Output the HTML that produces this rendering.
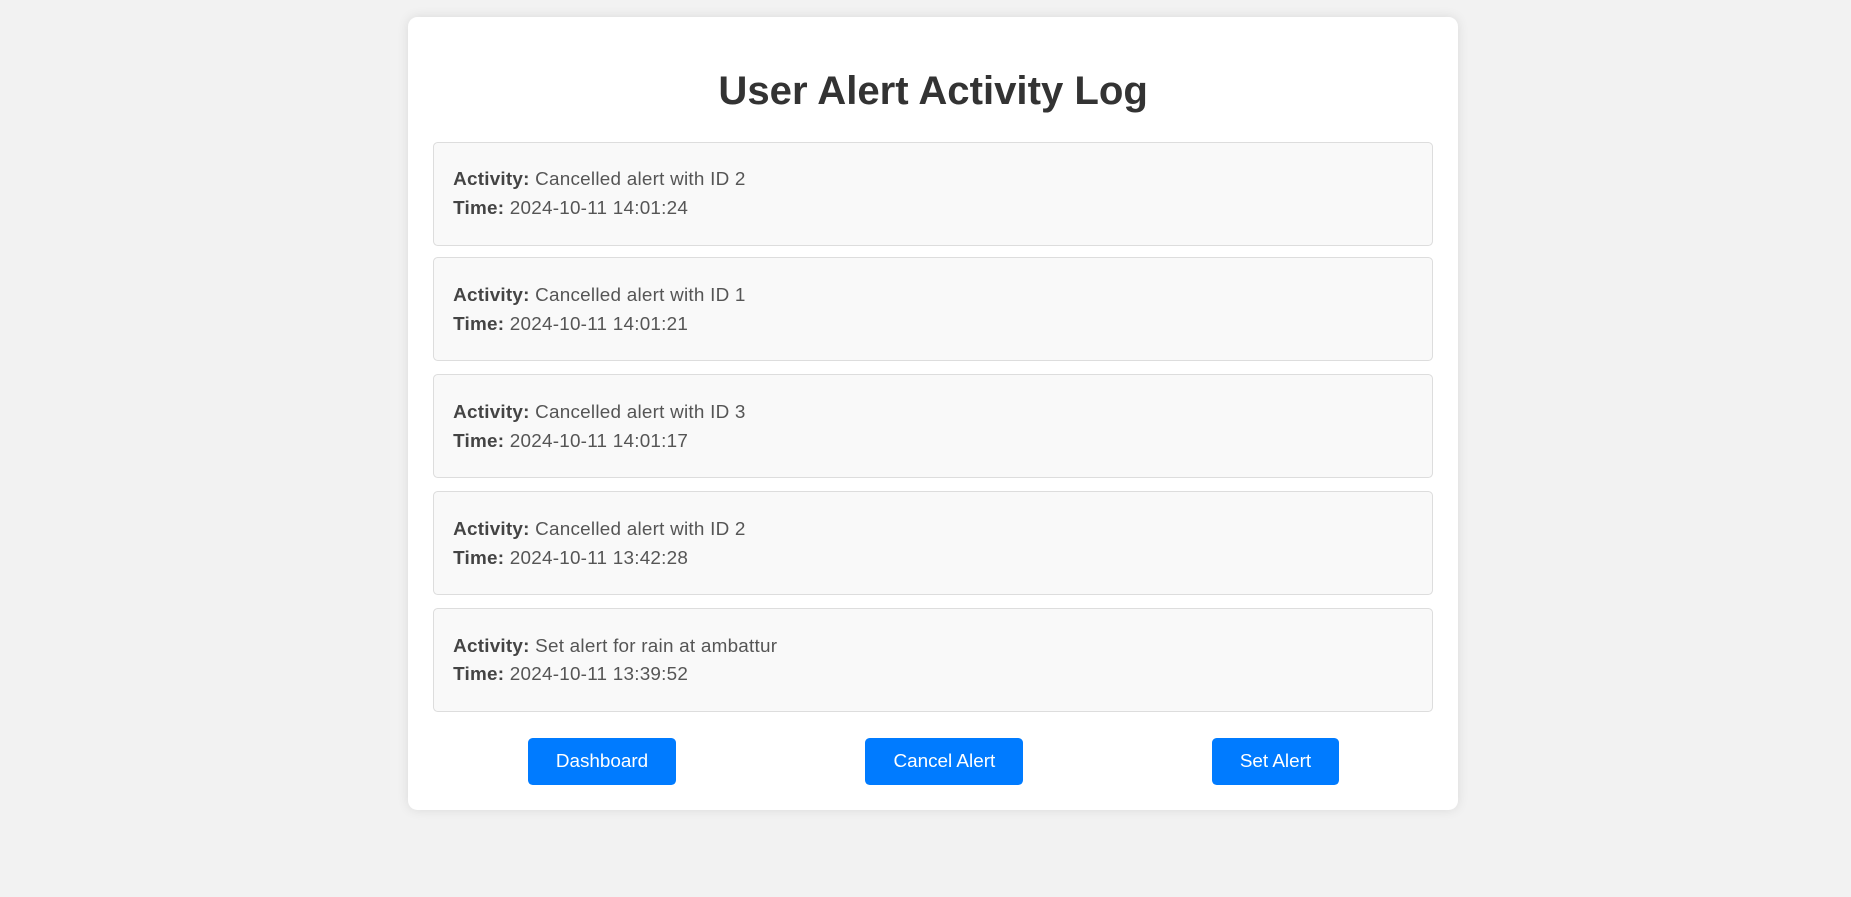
<!DOCTYPE html>
<html><head><meta charset="utf-8"><style>
html,body{margin:0;padding:0;}
body{width:1851px;height:897px;background:#f2f2f2;overflow:hidden;font-family:"Liberation Sans",Arial,sans-serif;}
.z{zoom:1.18049;position:relative;width:1568px;height:760px;}
.card{position:absolute;left:346px;top:14px;width:889px;height:672px;background:#fff;border-radius:8px;box-shadow:0 0 10px rgba(0,0,0,0.1);}
h1{position:absolute;left:0;right:0;top:42px;margin:0;text-align:center;font-size:34px;line-height:42px;color:#333;font-weight:bold;}
.item{position:absolute;left:21px;width:847px;height:88px;box-sizing:border-box;background:#f9f9f9;border:1px solid #ddd;border-radius:4px;padding:20px 16px;font-size:16px;line-height:24.5px;color:#555;letter-spacing:0.2px;}
.item b{color:#444;}
.btn{position:absolute;top:611px;height:40px;background:#007bff;color:#fff;border-radius:4px;font-size:16px;line-height:40px;text-align:center;}
</style></head><body><div class="z"><div class="card">
<h1>User Alert Activity Log</h1>
<div class="item" style="top:106px"><b>Activity:</b> Cancelled alert with ID 2<br><b>Time:</b> 2024-10-11 14:01:24</div>
<div class="item" style="top:204px"><b>Activity:</b> Cancelled alert with ID 1<br><b>Time:</b> 2024-10-11 14:01:21</div>
<div class="item" style="top:303px"><b>Activity:</b> Cancelled alert with ID 3<br><b>Time:</b> 2024-10-11 14:01:17</div>
<div class="item" style="top:402px"><b>Activity:</b> Cancelled alert with ID 2<br><b>Time:</b> 2024-10-11 13:42:28</div>
<div class="item" style="top:501px"><b>Activity:</b> Set alert for rain at ambattur<br><b>Time:</b> 2024-10-11 13:39:52</div>
<div class="btn" style="left:101px;width:126px">Dashboard</div>
<div class="btn" style="left:387px;width:134px">Cancel Alert</div>
<div class="btn" style="left:681px;width:107px">Set Alert</div>
</div></div></body></html>
